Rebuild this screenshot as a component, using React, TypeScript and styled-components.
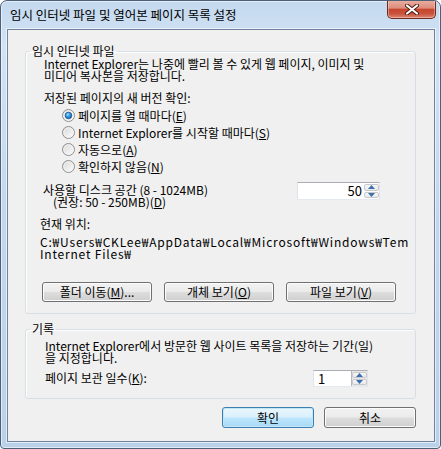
import React from 'react';
import styled, { createGlobalStyle } from 'styled-components';

const FONT = `"Noto Sans CJK KR", "Noto Sans", sans-serif`;

const Global = createGlobalStyle`
  html, body { margin: 0; padding: 0; background: #ffffff; }
  body { font-family: ${FONT}; font-size: 12px; color: #000; }
  * { box-sizing: border-box; }
`;

const Window = styled.div`
  width: 441px;
  height: 449px;
  display: flex;
  flex-direction: column;
  border: 1px solid #4d6078;
  border-radius: 7px 7px 4px 4px;
  background: linear-gradient(180deg, #c4d9ef 0%, #d2e3f4 10%, #c3d8ee 45%, #bad1ea 100%);
  box-shadow: inset 0 0 0 1px rgba(255, 255, 255, 0.55);
  font-family: ${FONT};
  font-size: 12px;
  overflow: hidden;
`;

const TitleBar = styled.div`
  height: 28px;
  display: flex;
  align-items: flex-start;
  padding-left: 9px;
  padding-right: 4px;
`;

const Title = styled.div`
  margin-top: 8px;
  line-height: 12px;
  font-size: 12.5px;
  color: #000;
  white-space: nowrap;
`;

const CloseButton = styled.div`
  margin-left: auto;
  margin-top: -1px;
  width: 49px;
  height: 19px;
  display: flex;
  align-items: center;
  justify-content: center;
  border: 1px solid #6e2b22;
  border-top: none;
  border-radius: 0 0 5px 5px;
  background: linear-gradient(180deg, #eab0a3 0%, #dd8d7b 45%, #c8452d 52%, #c9523a 75%, #db8670 100%);
  box-shadow: inset 0 0 0 1px rgba(255, 220, 210, 0.45);
`;

const Client = styled.div`
  margin: 0 5px 6px 6px;
  width: 428px;
  height: 413px;
  border: 1px solid #6f849c;
  background: #f0f0f0;
  display: flex;
  flex-direction: column;
  box-shadow: 0 0 0 1px rgba(255, 255, 255, 0.6);
`;

const Group = styled.fieldset<{ $top: number }>`
  margin: ${(p) => p.$top}px 18px 0 17px;
  padding: 0;
  min-width: 0;
  border: 1px solid #d5dfe5;
  border-radius: 3px;
  box-shadow: inset 1px 1px 0 #ffffff;
`;

const Legend = styled.legend`
  margin-left: 4px;
  padding: 0 2px;
  line-height: 12px;
  font-size: 12px;
`;

const GroupBody = styled.div<{ $pt: number; $pb: number }>`
  display: flex;
  flex-direction: column;
  padding: ${(p) => p.$pt}px 0 ${(p) => p.$pb}px 14px;
`;

const Text = styled.div<{ $mt?: number; $ml?: number }>`
  margin-top: ${(p) => p.$mt ?? 0}px;
  margin-left: ${(p) => p.$ml ?? 0}px;
  line-height: 12px;
  white-space: nowrap;
`;

const PathText = styled.div`
  margin-top: 6px;
  line-height: 12px;
  letter-spacing: 0.8px;
  white-space: nowrap;
`;

const RadioList = styled.div`
  margin-top: 3px;
  margin-left: 22px;
  display: flex;
  flex-direction: column;
`;

const RadioRow = styled.div`
  height: 17px;
  display: flex;
  align-items: center;
  gap: 3px;
  line-height: 12px;
`;

const FieldRow = styled.div<{ $mt: number; $ml: number }>`
  margin-top: ${(p) => p.$mt}px;
  margin-left: ${(p) => p.$ml}px;
  display: flex;
  align-items: flex-start;
`;

const FieldLabel = styled.div<{ $w: number; $mt: number }>`
  width: ${(p) => p.$w}px;
  margin-top: ${(p) => p.$mt}px;
  line-height: 12px;
  white-space: nowrap;
`;

const Indent = styled.div`
  padding-left: 10px;
`;

const SpinBox = styled.div<{ $w: number; $h: number }>`
  width: ${(p) => p.$w}px;
  height: ${(p) => p.$h}px;
  display: flex;
  border: 1px solid #e2e3ea;
  border-top-color: #abadb3;
  border-bottom-color: #e3e9ef;
  background: #ffffff;
`;

const SpinValue = styled.div<{ $align: 'left' | 'right' }>`
  flex: 1;
  line-height: 16px;
  font-size: 13px;
  text-align: ${(p) => p.$align};
  padding: 0 ${(p) => (p.$align === 'right' ? 1 : 0)}px 0 ${(p) => (p.$align === 'left' ? 4 : 0)}px;
`;

const SpinButtons = styled.div<{ $framed: boolean }>`
  width: 16px;
  display: flex;
  flex-direction: column;
  gap: 1px;
  padding: 1px 0;
  border-left: 1px solid ${(p) => (p.$framed ? '#b8b8b8' : 'transparent')};
  background: ${(p) => (p.$framed ? '#e8e8e8' : '#ffffff')};
`;

const SpinButton = styled.div`
  flex: 1;
  display: flex;
  align-items: center;
  justify-content: center;
  border: 1px solid #c7c9cc;
  border-radius: 2px;
  background: linear-gradient(180deg, #f7f7f7 0%, #e9e9e9 100%);
`;

const ButtonRow = styled.div<{ $mt: number; $ml: number; $gap: number; $end?: boolean }>`
  margin-top: ${(p) => p.$mt}px;
  margin-left: ${(p) => p.$ml}px;
  display: flex;
  gap: ${(p) => p.$gap}px;
  justify-content: ${(p) => (p.$end ? 'flex-end' : 'flex-start')};
  padding-right: ${(p) => (p.$end ? 18 : 0)}px;
`;

const Button = styled.div<{ $w: number; $h: number; $default?: boolean }>`
  width: ${(p) => p.$w}px;
  height: ${(p) => p.$h}px;
  display: flex;
  align-items: center;
  justify-content: center;
  line-height: 12px;
  border: 1px solid ${(p) => (p.$default ? '#3c7fb1' : '#707070')};
  border-radius: 3px;
  background: ${(p) =>
    p.$default
      ? 'linear-gradient(180deg, #eaf6fd 0%, #d9f0fc 48%, #bee6fd 52%, #a7d9f5 100%)'
      : 'linear-gradient(180deg, #f2f2f2 0%, #ebebeb 48%, #dddddd 52%, #cfcfcf 100%)'};
  box-shadow: inset 0 0 0 1px ${(p) => (p.$default ? '#c4e5f6' : '#fcfcfc')};
  white-space: nowrap;
`;

const Radio = ({ checked }: { checked?: boolean }) => (
  <svg width="13" height="13" viewBox="0 0 13 13">
    <defs>
      <linearGradient id="rbg" x1="0" y1="0" x2="1" y2="1">
        <stop offset="0" stopColor="#d6d6d6" />
        <stop offset="1" stopColor="#ffffff" />
      </linearGradient>
      <radialGradient id="rdot" cx="0.4" cy="0.35" r="0.7">
        <stop offset="0" stopColor="#9fdcff" />
        <stop offset="0.5" stopColor="#2b94e0" />
        <stop offset="1" stopColor="#1a5a9c" />
      </radialGradient>
    </defs>
    <circle cx="6.5" cy="6.5" r="6" fill="url(#rbg)" stroke="#8e8f8f" strokeWidth="1" />
    <circle cx="6.5" cy="6.5" r="4.6" fill="none" stroke="#f4f4f4" strokeWidth="0.8" />
    {checked && <circle cx="6.5" cy="6.5" r="3.3" fill="url(#rdot)" stroke="#1f5386" strokeWidth="0.8" />}
  </svg>
);

const Arrow = ({ up }: { up?: boolean }) => (
  <svg width="7" height="4" viewBox="0 0 7 4">
    <path d={up ? 'M0 4 L3.5 0 L7 4 Z' : 'M0 0 L3.5 4 L7 0 Z'} fill="#3a6fb0" />
  </svg>
);

const Spinner = ({
  w,
  h,
  value,
  align,
  framed,
}: {
  w: number;
  h: number;
  value: string;
  align: 'left' | 'right';
  framed: boolean;
}) => (
  <SpinBox $w={w} $h={h}>
    <SpinValue $align={align}>{value}</SpinValue>
    <SpinButtons $framed={framed}>
      <SpinButton>
        <Arrow up />
      </SpinButton>
      <SpinButton>
        <Arrow />
      </SpinButton>
    </SpinButtons>
  </SpinBox>
);

const W = '\u20A9';

export default function App() {
  return (
    <>
      <Global />
      <Window>
        <TitleBar>
          <Title>임시 인터넷 파일 및 열어본 페이지 목록 설정</Title>
          <CloseButton>
            <svg width="14" height="11" viewBox="0 0 14 11">
              <path d="M2 1.5 L12 9.5 M12 1.5 L2 9.5" stroke="#4a1a14" strokeWidth="4" strokeLinecap="round" />
              <path d="M2 1.5 L12 9.5 M12 1.5 L2 9.5" stroke="#ffffff" strokeWidth="2.2" strokeLinecap="round" />
            </svg>
          </CloseButton>
        </TitleBar>
        <Client>
          <Group $top={15}>
            <Legend>임시 인터넷 파일</Legend>
            <GroupBody $pt={1} $pb={11}>
              <Text $ml={4}>
                Internet Explorer는 나중에 빨리 볼 수 있게 웹 페이지, 이미지 및
                <br />
                미디어 복사본을 저장합니다.
              </Text>
              <Text $mt={10} $ml={4}>
                저장된 페이지의 새 버전 확인:
              </Text>
              <RadioList>
                <RadioRow>
                  <Radio checked />
                  <span>
                    페이지를 열 때마다(<u>E</u>)
                  </span>
                </RadioRow>
                <RadioRow>
                  <Radio />
                  <span>
                    Internet Explorer를 시작할 때마다(<u>S</u>)
                  </span>
                </RadioRow>
                <RadioRow>
                  <Radio />
                  <span>
                    자동으로(<u>A</u>)
                  </span>
                </RadioRow>
                <RadioRow>
                  <Radio />
                  <span>
                    확인하지 않음(<u>N</u>)
                  </span>
                </RadioRow>
              </RadioList>
              <FieldRow $mt={7} $ml={3}>
                <FieldLabel $w={254} $mt={2}>
                  사용할 디스크 공간 (8 - 1024MB)
                  <Indent>
                    (권장: 50 - 250MB)(<u>D</u>)
                  </Indent>
                </FieldLabel>
                <Spinner w={83} h={18} value="50" align="right" framed={false} />
              </FieldRow>
              <Text $mt={10}>현재 위치:</Text>
              <PathText>
                C:{W}Users{W}CKLee{W}AppData{W}Local{W}Microsoft{W}Windows{W}Tem
                <br />
                Internet Files{W}
              </PathText>
              <ButtonRow $mt={22} $ml={2} $gap={12}>
                <Button $w={110} $h={20}>
                  폴더 이동(<u>M</u>)...
                </Button>
                <Button $w={110} $h={20}>
                  개체 보기(<u>O</u>)
                </Button>
                <Button $w={110} $h={20}>
                  파일 보기(<u>V</u>)
                </Button>
              </ButtonRow>
            </GroupBody>
          </Group>
          <Group $top={9}>
            <Legend>기록</Legend>
            <GroupBody $pt={5} $pb={11}>
              <Text $ml={5}>
                Internet Explorer에서 방문한 웹 사이트 목록을 저장하는 기간(일)
                <br />을 지정합니다.
              </Text>
              <FieldRow $mt={6} $ml={5}>
                <FieldLabel $w={268} $mt={2}>
                  페이지 보관 일수(<u>K</u>):
                </FieldLabel>
                <Spinner w={55} h={17} value="1" align="left" framed />
              </FieldRow>
            </GroupBody>
          </Group>
          <ButtonRow $mt={8} $ml={0} $gap={10} $end>
            <Button $w={92} $h={21} $default>
              확인
            </Button>
            <Button $w={92} $h={21}>
              취소
            </Button>
          </ButtonRow>
        </Client>
      </Window>
    </>
  );
}
